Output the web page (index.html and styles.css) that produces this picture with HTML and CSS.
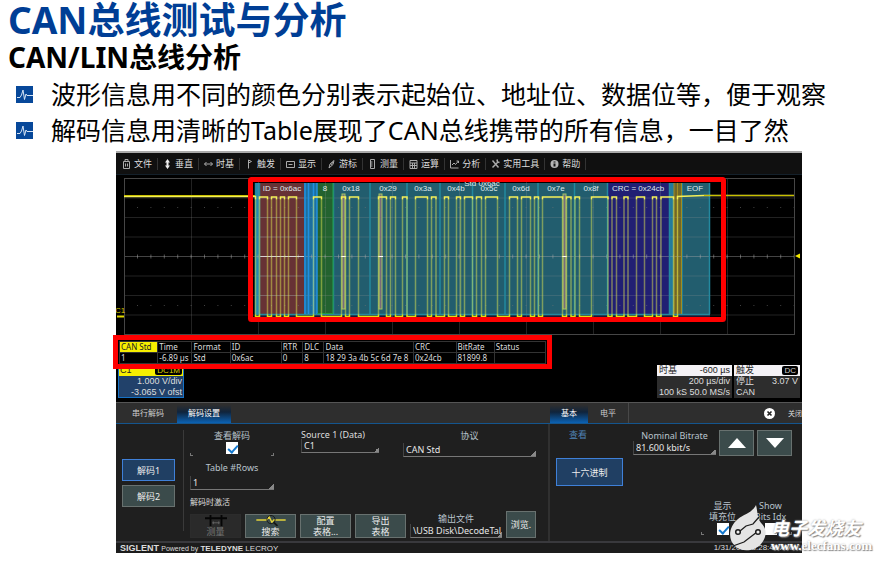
FILE: index.html
```html
<!DOCTYPE html>
<html lang="zh-CN">
<head>
<meta charset="utf-8">
<title>CAN总线测试与分析</title>
<link rel="stylesheet" href="styles.css">
</head>
<body>
<header class="heading">
  <h1>CAN总线测试与分析</h1>
  <h2>CAN/LIN总线分析</h2>
  <ul class="points">
    <li>
      <svg class="bullet" viewBox="0 0 17 17" aria-hidden="true"><rect width="17" height="17" fill="#07489a"/><path d="M1 11.500H4L5.500 9L7 4L8.500 13.500L10 8L11 9.500H17" fill="none" stroke="#d5e4f5" stroke-width="1"/></svg>
      <span>波形信息用不同的颜色分别表示起始位、地址位、数据位等，便于观察</span>
    </li>
    <li>
      <svg class="bullet" viewBox="0 0 17 17" aria-hidden="true"><rect width="17" height="17" fill="#07489a"/><path d="M1 11.500H4L5.500 9L7 4L8.500 13.500L10 8L11 9.500H17" fill="none" stroke="#d5e4f5" stroke-width="1"/></svg>
      <span>解码信息用清晰的Table展现了CAN总线携带的所有信息，一目了然</span>
    </li>
  </ul>
</header>

<main class="scope">
  <nav class="menu">
    <a href="#"><svg viewBox="0 0 9 10"><path d="M1.500 2.500h6v7h-6zM3 2.500v-2h3v2M3.500 4.500v3M5.500 4.500v3"/></svg>文件</a>
    <a href="#"><svg viewBox="0 0 9 10"><path class="strong" d="M4.500 2v6"/><path class="tips" d="M2 3.500L4.500 0L7 3.500zM2 6.500L4.500 10L7 6.500z"/></svg>垂直</a>
    <a href="#"><svg viewBox="0 0 9 10"><path d="M0.500 5h8M2.500 3L.5 5L2.500 7M6.500 3L8.500 5L6.500 7"/></svg>时基</a>
    <a href="#"><svg viewBox="0 0 9 10"><path d="M3.500 9.500V1L6.500 2.500L3.500 4"/></svg>触发</a>
    <a href="#"><svg viewBox="0 0 9 10"><path d="M.5 2.500h8v6h-8zM2.500 5.500h4"/></svg>显示</a>
    <a href="#"><svg viewBox="0 0 9 10"><path d="M2 9L3 5L7 1.500L6 5.500zM4 6L6 3"/></svg>游标</a>
    <a href="#"><svg viewBox="0 0 9 10"><path d="M2.500 .5h4v9h-4zM2.500 3h2M2.500 5h2M2.500 7h2"/></svg>测量</a>
    <a href="#"><svg viewBox="0 0 9 10"><path d="M1 1.500h7v8H1zM1 4h7M3.500 4v5M5.500 4v5M1 6.500h7"/></svg>运算</a>
    <a href="#"><svg viewBox="0 0 9 10"><path d="M.5 1v8h8M2 6L4 4L5.500 5.500L8.500 2M6.500 2h2v2"/></svg>分析</a>
    <a href="#"><svg viewBox="0 0 9 10"><path d="M1.500 8.500L7 3M1.500 1.500L7.500 8.500M6 .5L6.500 3L8.500 3.500" stroke-width="1.500"/></svg>实用工具</a>
    <a href="#"><svg viewBox="0 0 9 10"><circle cx="4.500" cy="5" r="4" fill="#b5b5b5" stroke="none"/><path class="dark" d="M4.500 4.500v3M4.500 2.500v1"/></svg>帮助</a>
  </nav>

  <svg class="plot" viewBox="116 175 686 162" role="img" aria-label="CAN">
    <defs>
      <linearGradient id="trace" gradientUnits="userSpaceOnUse" x1="0" y1="195" x2="0" y2="319">
        <stop offset="0" stop-color="#f4f058"/>
        <stop offset=".03" stop-color="#f4f058"/>
        <stop offset=".04" stop-color="#dfe650" stop-opacity=".48"/>
        <stop offset=".96" stop-color="#dfe650" stop-opacity=".48"/>
        <stop offset=".97" stop-color="#e2dc10"/>
        <stop offset="1" stop-color="#e2dc10"/>
      </linearGradient>
    </defs>
    <rect x="116" y="175" width="686" height="162" fill="#000"/>
    <rect x="255" y="183" width="455" height="131" fill="#225d6e"/>
    <rect x="255" y="314" width="455" height="4" fill="#1b1730"/>
    <rect x="255" y="183" width="5" height="131" fill="#2489ae"/>
    <rect x="260" y="183" width="44" height="131" fill="#673235"/>
    <rect x="304" y="183" width="13" height="131" fill="#1c6f9f"/>
    <rect x="317" y="183" width="16" height="131" fill="#23622f"/>
    <rect x="608" y="183" width="61" height="131" fill="#211f73"/>
    <rect x="669" y="183" width="5" height="131" fill="#247a9b"/>
    <rect x="674" y="183" width="8" height="131" fill="#706628"/>
    <path d="M124 198H794M124 217.500H794M124 237H794M124 276H794M124 295.500H794M124 315H794M191.500 179V334M258.500 179V334M325.500 179V334M392.500 179V334M459.500 179V334M526.500 179V334M593.500 179V334M660.500 179V334M727.500 179V334" fill="none" stroke="#999" stroke-opacity=".22"/>
    <path d="M124 207.500H794M124 305.500H794" fill="none" stroke="#777" stroke-opacity=".55" stroke-dasharray="1 12.400" stroke-dashoffset="-13"/>
    <path d="M124 256.500H794" stroke="#aaa" stroke-opacity=".4"/>
    <path d="M124 256.500H794" stroke="#aaa" stroke-opacity=".5" stroke-width="4" stroke-dasharray="1 12.400" stroke-dashoffset="-13"/>
    <path d="M260 198H304M260 217.500H304M260 237H304M260 276H304M260 295.500H304" stroke="#aaa" stroke-opacity=".3"/>
    <path d="M260 256.500H304" stroke="#eee" stroke-opacity=".8"/>
    <rect x="124.500" y="178.500" width="670" height="156" fill="none" stroke="#464646"/>
    <path d="M255.500 183V314M259.500 183V314M333.500 183V314M370 183V314M407 183V314M440 183V314M472.500 183V314M505 183V314M538 183V314M574.500 183V314M607.500 183V314M669.500 183V314M682 183V314M709.500 183V314M255 314.500H710" fill="none" stroke="#23899f" stroke-width="1.500"/>
    <path d="M305 183V314M308.500 183V314M313.500 183V314M317 183V314" stroke="#2190df" stroke-width="1.500"/>
    <path d="M317.500 313.500H333V183" fill="none" stroke="#229b3b"/>
    <path d="M674 183V314M677.500 183V314M681.500 183V314" stroke="#a08c20"/>
    <g fill="#786b7b" stroke="#9fc565"><rect x="342" y="194" width="3" height="115"/><rect x="379" y="194" width="3" height="115"/><rect x="563" y="194" width="3" height="115"/></g>
    <path d="M378 256.500h5M341 256.500h5M562 256.500h5" stroke="#fff"/>
    <path class="wave" d="M124 196.500H255.500V316.500H259.500V197H267.500V316.500H271.500V197H276.500V316.500H280.500V197H284.500V316.500H288.500V197H296.500V316.500H313.500V197H321.500V316.500H341.500V197H345.500V316.500H349.500V197H358.500V316.500H378.500V197H386.500V316.500H390.500V197H395.500V316.500H402.500V197H407V316.500H415.500V197H427.500V316.500H431.500V197H436V316.500H444.500V197H448.500V316.500H456.500V197H460.500V316.500H464.500V197H472.500V316.500H476.500V197H481.500V316.500H485.500V197H497.500V316.500H509.500V197H517.500V316.500H521.500V197H530.500V316.500H534.500V197H538.500V316.500H542.500V197H562.500V316.500H566.500V197H571V316.500H575V197H579.500V316.500H591.500V197H608V316.500H612V197H616.500V316.500H624V197H628V316.500H636.500V197H644.500V316.500H652.500V197H656.500V316.500H661V197H673.500V316.500H677.500V196.500L704 195.500H794"/>
    <path d="M124 195.500H255M704 195.500H794" stroke="#c9c000" stroke-width="1"/>
    <path d="M117 316.500H124" stroke="#e2d800" stroke-width="2"/>
    <text x="115" y="313" class="chan">C1</text>
    <path d="M795 256L800 253.500V258.500z" fill="#f5ea00"/>
    <g class="labels">
      <text x="482" y="186">Std 0x6ac</text>
      <text x="282" y="191">ID = 0x6ac</text>
      <text x="325" y="191">8</text>
      <text x="351" y="191">0x18</text>
      <text x="388" y="191">0x29</text>
      <text x="423" y="191">0x3a</text>
      <text x="456" y="191">0x4b</text>
      <text x="489" y="191">0x5c</text>
      <text x="521" y="191">0x6d</text>
      <text x="556" y="191">0x7e</text>
      <text x="591" y="191">0x8f</text>
      <text x="638" y="191">CRC = 0x24cb</text>
      <text x="695" y="191">EOF</text>
    </g>
    <rect x="250.500" y="179.500" width="473" height="140" rx="1" fill="none" stroke="#f00" stroke-width="5"/>
  </svg>

  <div class="decode">
    <table>
      <colgroup><col class="c-name"><col class="c-time"><col class="c-format"><col class="c-id"><col class="c-rtr"><col class="c-dlc"><col class="c-data"><col class="c-crc"><col class="c-rate"><col class="c-status"></colgroup>
      <thead><tr><th class="on">CAN Std</th><th>Time</th><th>Format</th><th>ID</th><th>RTR</th><th>DLC</th><th>Data</th><th>CRC</th><th>BitRate</th><th>Status</th></tr></thead>
      <tbody><tr><td>1</td><td>-6.89 µs</td><td>Std</td><td>0x6ac</td><td>0</td><td>8</td><td>18 29 3a 4b 5c 6d 7e 8</td><td>0x24cb</td><td>81899.8</td><td></td></tr></tbody>
    </table>
  </div>

  <section class="readouts">
    <div class="readout channel">
      <div class="top"><span>C1</span><span class="badge">DC1M</span></div>
      <div class="row"><span></span><span>1.000 V/div</span></div>
      <div class="row"><span></span><span>-3.065 V ofst</span></div>
    </div>
    <div class="readout timebase">
      <div class="top"><span>时基</span><span>-600 µs</span></div>
      <div class="row"><span></span><span>200 µs/div</span></div>
      <div class="row"><span>100 kS</span><span>50.0 MS/s</span></div>
    </div>
    <div class="readout trigger">
      <div class="top"><span>触发</span><span class="badge">DC</span></div>
      <div class="row"><span>停止</span><span>3.07 V</span></div>
      <div class="row"><span>CAN</span></div>
    </div>
  </section>

  <section class="dialog">
    <div class="tabs">
      <button class="tab first">串行解码</button>
      <button class="tab active">解码设置</button>
    </div>
    <div class="tabs tabs-right">
      <button class="tab active">基本</button>
      <button class="tab level">电平</button>
      <button class="close"><svg viewBox="0 0 11 11" aria-hidden="true"><circle cx="5.500" cy="5.500" r="5.500" fill="#fff"/><path d="M3.500 3.500l4 4M7.500 3.500l-4 4" stroke="#222" stroke-width="1.600"/></svg><span>关闭</span></button>
    </div>

    <div class="pane">
      <div class="decoders">
        <button class="btn selected">解码1</button>
        <button class="btn">解码2</button>
      </div>
      <div class="settings">
        <div class="fields">
          <div class="stack">
            <div class="field check"><label for="view">查看解码</label><input type="checkbox" id="view" checked></div>
            <div class="field rows"><label for="rows">Table #Rows</label><select id="rows"><option>1</option></select></div>
          </div>
          <div class="field source"><label for="source">Source 1 (Data)</label><select id="source"><option>C1</option></select></div>
          <div class="field protocol"><label for="protocol">协议</label><select id="protocol"><option>CAN Std</option></select></div>
        </div>
        <div class="caption">解码时激活</div>
        <div class="actions">
          <button class="btn tool off"><svg viewBox="0 0 24 12" aria-hidden="true"><path d="M0 3.500H24M6 0V12M18 0V12" stroke="#050505" stroke-width="2"/><path d="M8 8.500h8M9 7v3M15 7v3" stroke="#666"/></svg>测量</button>
          <button class="btn tool"><svg class="search" viewBox="0 0 34 12" aria-hidden="true"><path d="M1 5.500H12L15 2L18 8L20 5.500H33" fill="none" stroke="#e4d43b" stroke-width="1.500"/><circle cx="17" cy="5" r="4.500" fill="none" stroke="#171717"/><path d="M20 8l4 4" stroke="#171717" stroke-width="2"/></svg>搜索</button>
          <button class="btn">配置<br>表格...</button>
          <button class="btn">导出<br>表格</button>
          <div class="field file"><label for="file">输出文件</label><input type="text" id="file" value="\USB Disk\DecodeTal"></div>
          <button class="btn browse">浏览.</button>
        </div>
      </div>
    </div>

    <div class="pane pane-right">
      <div class="basic">
        <div class="view"><span class="view-title">查看</span><button class="btn selected hex">十六进制</button></div>
        <div class="field rate"><label for="rate">Nominal Bitrate</label><input type="text" id="rate" value="81.600 kbit/s"></div>
        <button class="btn step" aria-label="+"><svg viewBox="0 0 18 10"><path d="M0 10L9 0L18 10z" fill="#fff"/></svg></button>
        <button class="btn step" aria-label="-"><svg viewBox="0 0 18 10"><path d="M0 0L9 10L18 0z" fill="#fff"/></svg></button>
      </div>
      <div class="bits">
        <div class="field check"><label for="stuff">显示<br>填充位</label><input type="checkbox" id="stuff" checked></div>
        <div class="field check"><label for="idx">Show<br>Bits Idx</label><input type="checkbox" id="idx"></div>
      </div>
    </div>
  </section>

  <footer class="status">
    <span><b class="brand">SIGLENT</b> <span class="by">Powered by</span> <b>TELEDYNE</b> LECROY</span>
    <time>1/31/2015 3:28:45 AM</time>
  </footer>

  <div class="watermark">
    <svg viewBox="0 0 38 48" aria-hidden="true"><path d="M26 0C22 8 14 9 8 14C-2 22-2 35 5 41C12 48 25 46 31 39C37 32 37 24 32 19C27 14 28 8 26 0z" fill="#e4e4e4"/><path d="M10 26L16 21L23 19L29 12M3 41L14 37L27 27" fill="none" stroke="#1c1c1c" stroke-width="1.300"/><circle cx="8" cy="27" r="2.300" fill="#eee" stroke="#1c1c1c" stroke-width="1.500"/><circle cx="28" cy="27" r="2.300" fill="#eee" stroke="#1c1c1c" stroke-width="1.500"/></svg>
    <span class="mark"><span class="mark-name">电子发烧友</span><span class="mark-site">www.elecfans.com</span></span>
  </div>
</main>
</body>
</html>
```
FILE: styles.css
```css
* { box-sizing: border-box; }

body {
  margin: 0;
  background: #fff;
  color: #000;
  font-family: "Noto Sans", "Noto Sans CJK SC", sans-serif;
}

h1, h2, ul { margin: 0; padding: 0; font-weight: normal; }

.heading { padding: 0 8px 3px; }
.heading h1 { height: 40px; color: #003e95; font-size: 37px; font-weight: 700; line-height: 40px; }
.heading h2 { height: 36px; font-size: 28px; font-weight: 700; line-height: 34px; }
.points { list-style: none; font-size: 25px; line-height: 34px; }
.points li { display: flex; align-items: center; gap: 18px; height: 36px; padding-left: 8px; white-space: nowrap; }
.bullet { width: 17px; height: 17px; flex: none; }

.scope {
  position: relative;
  margin: 0 77px 8px 116px;
  background: #000;
  color: #ddd;
  font-size: 9px;
  line-height: 11px;
}

button, input, select { font: inherit; color: inherit; margin: 0; }
button { cursor: pointer; }

.menu {
  display: flex;
  align-items: center;
  height: 24px;
  padding-left: 1px;
  background: #101010;
  border-top: 2px solid #aaa;
  border-bottom: 1px solid #14202a;
}
.menu a {
  display: flex;
  align-items: center;
  gap: 3px;
  height: 12px;
  padding: 0 5px;
  border-right: 1px solid #333;
  color: #ddd;
  text-decoration: none;
  white-space: nowrap;
}
.menu svg { width: 9px; height: 10px; fill: none; stroke: #aaa; stroke-width: 1; }
.menu .strong { stroke: #eee; stroke-width: 2; }
.menu .tips { fill: #eee; stroke: none; }
.menu .dark { stroke: #111; stroke-width: 2; }

.plot { display: block; width: 100%; height: auto; }
.wave { fill: none; stroke: url(#trace); stroke-width: 1.5; }
.chan { fill: #d8cc00; font: 8px "Liberation Sans", sans-serif; }
.labels { fill: #dfe9ea; font: 8px "Liberation Sans", sans-serif; text-anchor: middle; }

.decode {
  position: relative;
  width: 64%;
  margin-left: -3px;
  margin-top: -2px;
  padding: 1px 1px 0;
  border: 5px solid #f00;
  background: #000;
  z-index: 1;
}
.decode table { width: 100%; table-layout: fixed; border-collapse: collapse; }
.decode th, .decode td {
  height: 11px;
  padding: 0 0 0 1px;
  overflow: hidden;
  border: 1px solid #333;
  font-size: 8px;
  font-weight: 400;
  line-height: 10px;
  text-align: left;
  white-space: nowrap;
}
.decode th.on { background: #f6ee00; color: #222; }
.c-name { width: 9%; } .c-time { width: 8%; } .c-format { width: 9%; } .c-id { width: 12%; }
.c-rtr { width: 5%; } .c-dlc { width: 5%; } .c-data { width: 21%; } .c-crc { width: 10%; }
.c-rate { width: 9%; } .c-status { width: 12%; }

.readouts { display: flex; gap: 2px; margin-top: -4px; padding: 0 2px 4px; font-family: "Liberation Sans", "Noto Sans CJK SC", sans-serif; }
.readout { background: #2d2d2d; line-height: 10px; }
.readout > div { display: flex; justify-content: space-between; padding: 0 2px; white-space: nowrap; }
.readout .top { height: 11px; line-height: 11px; background: #f4f2f6; color: #222; }
.readout .row { height: 11px; }
.channel { width: 66px; margin-right: auto; background: #21416a; outline: 1px solid #1672c6; outline-offset: -1px; }
.readout.channel .top { background: #f6ee00; }
.timebase { width: 75px; }
.trigger { width: 66px; }
.badge { height: 9px; padding: 0 2px; margin-top: 1px; border-radius: 2px; background: #000; color: #ccc; font-size: 8px; line-height: 9px; }
.channel .badge { color: #ddd400; }

.dialog {
  display: grid;
  grid-template-columns: minmax(0, 17fr) minmax(0, 10fr);
  background: #1f1f1f;
  border-top: 1px solid #555;
}
.tabs { display: flex; height: 21px; background: #2e2e2e; border-bottom: 1px solid #14558e; }
.tab { border: 0; padding: 0 11px; background: none; font-size: 8px; line-height: 18px; color: #ccc; white-space: nowrap; }
.tab.first { padding: 0 13px 0 16px; }
.tab.active { background: linear-gradient(#2e2e2e 10%, #10243c 45%, #0b62b4); color: #fff; }
.tabs-right { padding-left: 2px; }
.tab.level { border-right: 1px solid #484848; padding: 0 12px; }
.close { display: flex; align-items: center; gap: 13px; margin-left: auto; padding: 0; border: 0; background: none; font-size: 7px; }
.close svg { width: 11px; height: 11px; }

.pane { display: flex; height: 117px; padding: 6px 12px 6px 6px; }
.pane-right { display: block; padding: 6px 10px 6px 6px; border-left: 2px solid #303030; }
.decoders { display: flex; flex-direction: column; gap: 4px; width: 62px; padding: 29px 8px 0 0; margin-bottom: 4px; border-right: 1px solid #3a3a3a; }
.btn { flex: none; padding: 0; border: 1px solid #68716f; background: #3b4b4b; color: #eee; text-align: center; white-space: nowrap; }
.btn.selected { border: 1px solid #3f80d8; background: #203f63; }
.decoders .btn { height: 22px; }

.settings { flex: 1; min-width: 0; padding-left: 6px; }
.fields { display: grid; grid-template-columns: 84fr 81fr 133fr; column-gap: 24px; }
.field { display: flex; flex-direction: column; }
.field label { color: #b9c3cc; text-align: center; white-space: nowrap; }
.field select, .field input[type="text"] {
  appearance: none;
  width: 100%;
  min-width: 0;
  height: 14px;
  padding: 0 0 0 2px;
  border: 0;
  border-bottom: 1px solid #777;
  border-left: 1px solid #444;
  border-radius: 0;
  outline: 0;
  background: linear-gradient(135deg, transparent 50%, #888 50%) right bottom / 5px 5px no-repeat;
  color: #e6e6e6;
  line-height: 12px;
}
.field input[type="checkbox"] { appearance: none; width: 12px; height: 12px; background: #fff; align-self: center; position: relative; }
.field input[type="checkbox"]:checked::after {
  content: "";
  position: absolute;
  left: 4px;
  top: 1px;
  width: 4px;
  height: 8px;
  border: solid #1479cf;
  border-width: 0 2px 2px 0;
  rotate: 42deg;
}
.check {
  background:
    linear-gradient(#777, #777) left bottom / 3px 1px,
    linear-gradient(#777, #777) left bottom / 1px 3px,
    linear-gradient(#777, #777) right bottom / 3px 1px,
    linear-gradient(#777, #777) right bottom / 1px 3px;
  background-repeat: no-repeat;
}
.check label { padding-bottom: 1px; }
.stack .check { height: 26px; }
.rows { margin-top: 6px; }
.rows label { padding-bottom: 3px; }
.source { padding-left: 3px; }
.field.source label { text-align: left; line-height: 9px; color: #ddd; }
.protocol label { padding-bottom: 2px; }
.caption { margin: 6px 0 4px; font-size: 8px; line-height: 11px; }
.actions { display: flex; align-items: flex-end; gap: 4px; }
.actions .btn { width: 51px; height: 24px; line-height: 11px; }
.tool { display: flex; flex-direction: column; align-items: center; }
.tool svg { width: 24px; height: 11px; flex: none; }
.tool .search { width: 34px; }
.btn.off { border-color: #2c2c2c; background: #2a2a2a; color: #777; }
.file { flex: 1; min-width: 0; }
.actions .browse { width: 30px; height: 27px; }

.basic { display: flex; gap: 3px; align-items: flex-start; }
.view { display: flex; flex-direction: column; align-items: flex-start; margin-right: auto; }
.view-title { width: 44px; text-align: center; color: #4f83b5; line-height: 9px; }
.hex { width: 67px; height: 28px; margin-top: 19px; }
.rate { width: 83px; }
.step { width: 35px; height: 26px; display: flex; align-items: center; justify-content: center; }
.step svg { width: 18px; height: 10px; }
.bits { display: flex; justify-content: flex-end; gap: 5px; margin-top: 14px; }
.bits .check { width: 43px; }

.status {
  display: flex;
  justify-content: space-between;
  height: 12px;
  padding: 0 10px 0 4px;
  border-top: 2px solid #39393d;
  background: #1c1c1c;
  font-family: "Liberation Sans", sans-serif;
  font-size: 8px;
  line-height: 10px;
  color: #ddd;
}
.brand { font-size: 9px; }
.by { font-size: 7px; }

.watermark { position: absolute; right: -70px; bottom: 0; display: flex; align-items: flex-end; gap: 3px; }
.watermark svg { width: 38px; height: 48px; }
.mark { display: flex; flex-direction: column; color: #fff; text-shadow: 1px 1px 1px #888, 0 0 2px #aaa; white-space: nowrap; }
.mark-name { font-size: 18px; font-weight: 700; font-style: italic; line-height: 22px; }
.mark-site { font: 700 13px/14px "Liberation Serif", serif; }
```
